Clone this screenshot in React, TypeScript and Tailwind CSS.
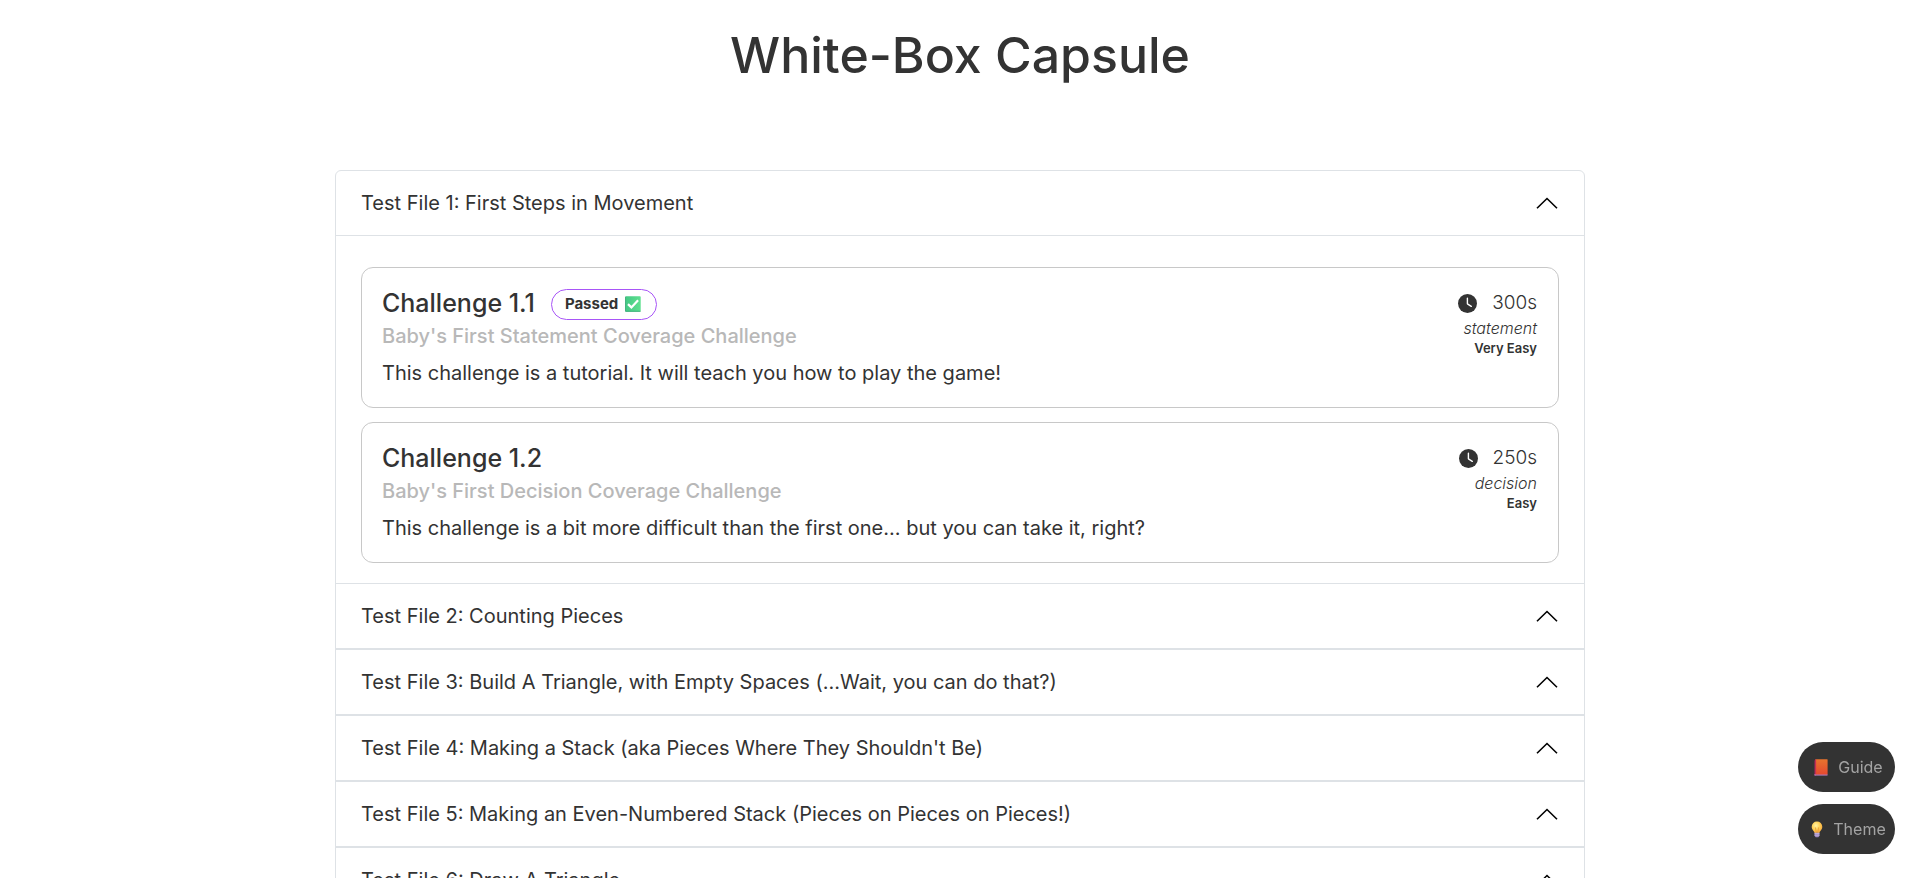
import { useState } from "react";

type Challenge = {
  name: string;
  title: string;
  description: string;
  time: string;
  coverage: string;
  difficulty: string;
  passed?: boolean;
};

type TestFile = { title: string; challenges: Challenge[] };

const testFiles: TestFile[] = [
  {
    title: "Test File 1: First Steps in Movement",
    challenges: [
      {
        name: "Challenge 1.1",
        title: "Baby's First Statement Coverage Challenge",
        description: "This challenge is a tutorial. It will teach you how to play the game!",
        time: "300s",
        coverage: "statement",
        difficulty: "Very Easy",
        passed: true,
      },
      {
        name: "Challenge 1.2",
        title: "Baby's First Decision Coverage Challenge",
        description: "This challenge is a bit more difficult than the first one... but you can take it, right?",
        time: "250s",
        coverage: "decision",
        difficulty: "Easy",
      },
    ],
  },
  { title: "Test File 2: Counting Pieces", challenges: [] },
  { title: "Test File 3: Build A Triangle, with Empty Spaces (...Wait, you can do that?)", challenges: [] },
  { title: "Test File 4: Making a Stack (aka Pieces Where They Shouldn't Be)", challenges: [] },
  { title: "Test File 5: Making an Even-Numbered Stack (Pieces on Pieces on Pieces!)", challenges: [] },
  { title: "Test File 6: Draw A Triangle", challenges: [] },
];

function Chevron() {
  return (
    <svg aria-hidden="true" viewBox="0 0 22 12" className="h-3 w-[22px] shrink-0" fill="none" stroke="#000" strokeWidth="1.6">
      <path d="M1 11.300 11 1.500 21 11.300" />
    </svg>
  );
}

function Clock() {
  return (
    <svg aria-hidden="true" viewBox="0 0 19 19" className="size-[19px]">
      <circle cx="9.5" cy="9.5" r="9.5" fill="#333" />
      <path d="M9.4 4.2v5.6l3.9 2.5" fill="none" stroke="#fff" strokeWidth="1.4" strokeLinecap="round" strokeLinejoin="round" />
    </svg>
  );
}

function CheckMark() {
  return (
    <svg aria-hidden="true" viewBox="0 0 16 16" className="size-4">
      <defs>
        <linearGradient id="check-fill" x1="0" y1="0" x2="1" y2="0">
          <stop offset="0" stopColor="#43c884" />
          <stop offset="1" stopColor="#5fe08f" />
        </linearGradient>
      </defs>
      <rect x="0.3" y="0.3" width="15.4" height="15.4" rx="0.8" fill="url(#check-fill)" />
      <path d="M0.5 0.8v14.5h15" fill="none" stroke="#3aa876" strokeWidth="0.8" />
      <path d="m3 8.1 3.4 3.3 6.7-7.2" fill="none" stroke="#fff" strokeWidth="2.2" />
    </svg>
  );
}

function Book() {
  return (
    <svg aria-hidden="true" viewBox="0 0 14 17" className="h-[17px] w-3.5">
      <defs>
        <linearGradient id="cover" x1="0" y1="0" x2="0" y2="1">
          <stop offset="0" stopColor="#e8742e" />
          <stop offset="1" stopColor="#e5492f" />
        </linearGradient>
      </defs>
      <path d="M0.5 1.5 2 0.5V16.5H0.5Z" fill="#a92a5c" />
      <path d="M0.5 15.2h13v1.3H0.5Z" fill="#c98ad6" />
      <rect x="1.4" y="0.3" width="12.2" height="15.2" rx="0.4" fill="url(#cover)" />
      <path d="M1.6 0.3v15" stroke="#c22d55" strokeWidth="1" />
    </svg>
  );
}

function Bulb() {
  return (
    <svg aria-hidden="true" viewBox="0 0 12 17" className="h-[17px] w-3">
      <defs>
        <radialGradient id="glass" cx="0.4" cy="0.35" r="0.65">
          <stop offset="0" stopColor="#fff3a6" />
          <stop offset="0.5" stopColor="#ffd45c" />
          <stop offset="1" stopColor="#f4a93c" />
        </radialGradient>
      </defs>
      <path d="M6 0.5a5.2 5.2 0 0 0-5.3 5.2c0 3.2 2.5 4 2.9 6.3h4.8c.4-2.3 2.9-3.1 2.9-6.3A5.2 5.2 0 0 0 6 .5Z" fill="url(#glass)" />
      <path d="M4.4 6.4 5.3 11.5h1.4l.9-5.1" fill="none" stroke="#e2912d" strokeWidth="0.7" />
      <path d="M3.5 11.8h5v3L7.3 16.3H4.7L3.5 14.8Z" fill="#a08bc4" />
      <path d="M3.5 12.6h5M3.5 14.2h5" stroke="#d3c5e8" strokeWidth="0.6" />
    </svg>
  );
}

function ChallengeCard({ challenge }: { challenge: Challenge }) {
  return (
    <article className="flex justify-between rounded-xl border border-[#c8c8c8] px-5 pt-5 pb-[19px]">
      <div>
        <div className="flex h-8 items-center gap-4">
          <h2 className="text-[25px] font-medium">{challenge.name}</h2>
          {challenge.passed && (
            <span className="flex h-[31px] items-center gap-[7px] rounded-2xl border border-[#a855f7] pr-[15px] pl-[13px] text-[15px] font-bold">
              Passed
              <CheckMark />
            </span>
          )}
        </div>
        <h3 className="text-xl leading-8 font-medium text-[#b8b8b8]">{challenge.title}</h3>
        <p className="pt-1.5 text-xl leading-[30px]">{challenge.description}</p>
      </div>
      <div className="flex flex-col items-end pr-px">
        <span className="flex h-[30px] items-center gap-[15px] text-[19px] font-light">
          <Clock />
          {challenge.time}
        </span>
        <span className="text-base leading-5 font-light italic">{challenge.coverage}</span>
        <span className="text-[13px] leading-5 font-semibold">{challenge.difficulty}</span>
      </div>
    </article>
  );
}

export default function App() {
  const [open, setOpen] = useState<number[]>([0]);
  const toggle = (i: number) =>
    setOpen((current) => (current.includes(i) ? current.filter((n) => n !== i) : [...current, i]));

  return (
    <div className="h-screen overflow-y-auto bg-white font-['Inter',sans-serif] text-[#333] [scrollbar-width:none]">
      <h1 className="pt-5 text-center text-[50px] leading-[70px] font-medium">White-Box Capsule</h1>
      <main className="mx-auto mt-20 mb-10 max-w-[1250px] rounded-md border border-[#dee2e6]">
        {testFiles.map((file, i) => {
          const isOpen = open.includes(i);
          return (
            <section key={file.title} className={i > 1 ? "border-t-2 border-[#dee2e6]" : i === 1 ? "border-t border-[#dee2e6]" : ""}>
              <button
                type="button"
                aria-expanded={isOpen}
                onClick={() => toggle(i)}
                className="flex h-16 w-full items-center justify-between pr-[26px] pl-[25px] text-left text-xl"
              >
                {file.title}
                <Chevron />
              </button>
              {isOpen && (
                <div className="flex flex-col gap-3.5 border-t border-[#dee2e6] px-[25px] pt-[31px] pb-5">
                  {file.challenges.map((challenge) => (
                    <ChallengeCard key={challenge.name} challenge={challenge} />
                  ))}
                </div>
              )}
            </section>
          );
        })}
      </main>
      <div className="fixed right-[25px] bottom-6 flex flex-col gap-3">
        <button type="button" className="flex h-[50px] w-[97px] items-center justify-center gap-2.5 rounded-[25px] bg-[#333] pl-1 text-base text-[#a3a3a3]">
          <Book />
          Guide
        </button>
        <button type="button" className="flex h-[50px] w-[97px] items-center justify-center gap-2.5 rounded-[25px] bg-[#333] pl-1 text-base text-[#a3a3a3]">
          <Bulb />
          Theme
        </button>
      </div>
    </div>
  );
}
